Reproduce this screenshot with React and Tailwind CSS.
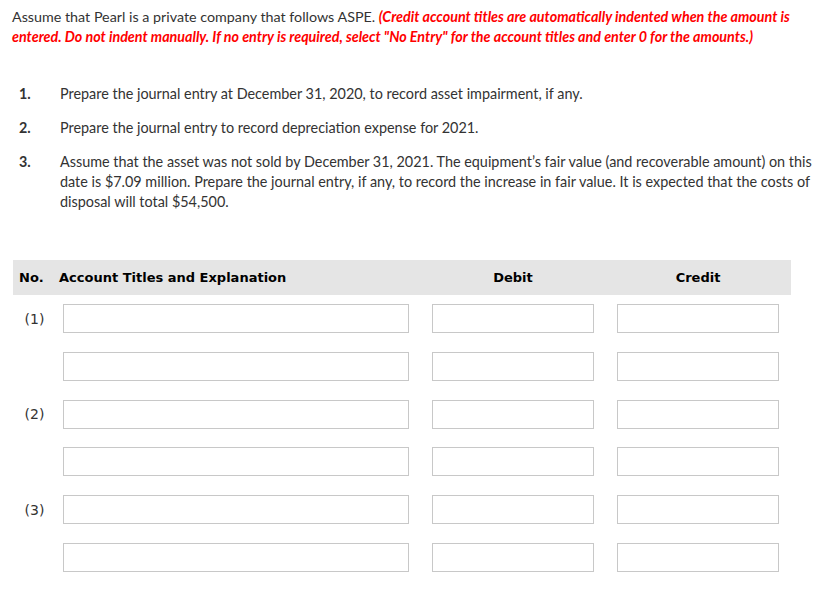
const rows = [
  { label: "(1)" },
  { label: "" },
  { label: "(2)" },
  { label: "" },
  { label: "(3)" },
  { label: "" },
];

const items = [
  "Prepare the journal entry at December 31, 2020, to record asset impairment, if any.",
  "Prepare the journal entry to record depreciation expense for 2021.",
  "Assume that the asset was not sold by December 31, 2021. The equipment’s fair value (and recoverable amount) on this date is $7.09 million. Prepare the journal entry, if any, to record the increase in fair value. It is expected that the costs of disposal will total $54,500.",
];

function Field({ width }) {
  return (
    <input
      type="text"
      className={`h-[29px] ${width} border border-[#c8c8c8] bg-white outline-none`}
    />
  );
}

export default function App() {
  return (
    <div className="min-h-[604px] w-[834px] bg-white font-['Lato','Open_Sans',sans-serif] text-[14.3px] leading-[20px] text-[#333]">
      <div className="pl-[12px] pr-[14px] pt-[7px]">
        <p>
          Assume that Pearl is a private company that follows ASPE.{" "}
          <span className="font-bold italic text-[#f00]">
            (Credit account titles are automatically indented when the amount is entered. Do not indent manually. If
            no entry is required, select "No Entry" for the account titles and enter 0 for the amounts.)
          </span>
        </p>

        <ol className="mt-[37px] flex flex-col gap-[14px]">
          {items.map((t, i) => (
            <li key={i} className="flex">
              <span className="w-[48px] shrink-0 pl-[7px] font-bold">{i + 1}.</span>
              <span className="text-[14.4px]">{t}</span>
            </li>
          ))}
        </ol>
      </div>

      <div className="ml-[13px] mt-[48px] w-[778px] font-['DejaVu_Sans','Verdana',sans-serif] text-[#222]">
        <div className="flex h-[35px] items-center bg-[#e5e5e5] text-[13px] font-bold text-black">
          <span className="w-[46px] pl-[6px]">No.</span>
          <span className="w-[373px]">Account Titles and Explanation</span>
          <span className="w-[162px] text-center">Debit</span>
          <span className="w-[23px]" />
          <span className="w-[162px] text-center">Credit</span>
        </div>

        <div className="mt-[9px] flex flex-col gap-[18.8px]">
          {rows.map((r, i) => (
            <div key={i} className="flex items-center">
              <span className="w-[43px] text-center text-[14px] text-[#333]">{r.label}</span>
              <span className="w-[7px]" />
              <Field width="w-[346px]" />
              <span className="w-[23px]" />
              <Field width="w-[162px]" />
              <span className="w-[23px]" />
              <Field width="w-[162px]" />
            </div>
          ))}
        </div>
      </div>
    </div>
  );
}
